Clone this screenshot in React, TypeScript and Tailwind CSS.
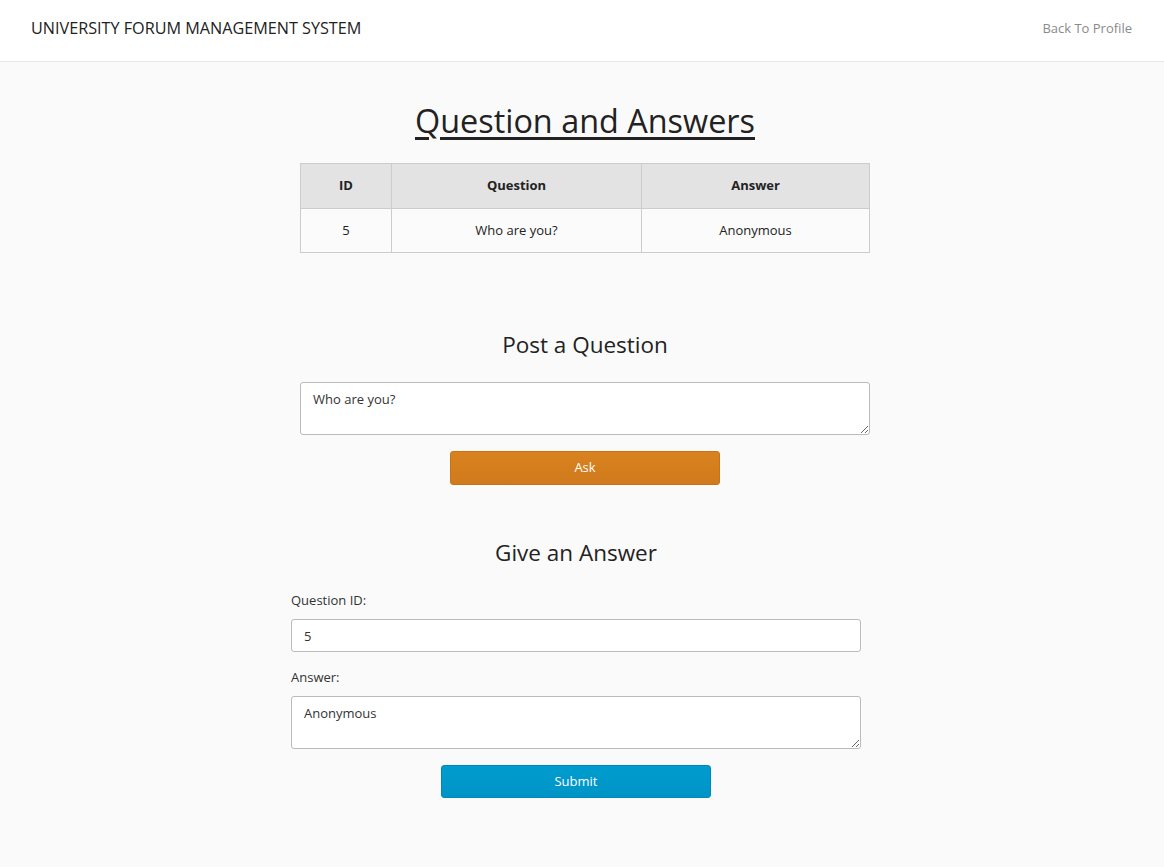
import React from "react";

export default function App() {
  const font = { fontFamily: '"Open Sans", "Noto Sans", sans-serif' };
  return (
    <div className="min-h-[867px] bg-[#fafafa] text-[#222]" style={font}>
      <header className="h-[62px] bg-white border-b border-[#e8e8e8] flex items-center justify-between pl-[31px] pr-[32px] pb-[4px]">
        <div className="text-[16.2px] text-[#222]">UNIVERSITY FORUM MANAGEMENT SYSTEM</div>
        <a className="text-[13px] text-[#8a8a8a]">Back To Profile</a>
      </header>

      <div className="flex flex-col">
        <div className="ml-[300px] w-[570px] flex flex-col items-center">
          <h1 className="mt-[34px] text-[32.4px] font-normal leading-[48px] underline underline-offset-[4px] decoration-[3px] text-[#222]">
            Question and Answers
          </h1>
          <table className="mt-[19px] w-[570px] border-collapse text-[13px] text-[#222]">
            <thead>
              <tr className="bg-[#e3e3e3]">
                <th className="w-[91px] h-[45px] border border-[#ccc] font-bold">ID</th>
                <th className="w-[250px] h-[45px] border border-[#ccc] font-bold">Question</th>
                <th className="h-[45px] border border-[#ccc] font-bold">Answer</th>
              </tr>
            </thead>
            <tbody>
              <tr className="bg-[#fbfbfb]">
                <td className="h-[44px] border border-[#ccc] text-center">5</td>
                <td className="h-[44px] border border-[#ccc] text-center">Who are you?</td>
                <td className="h-[44px] border border-[#ccc] text-center">Anonymous</td>
              </tr>
            </tbody>
          </table>

          <h2 className="mt-[76px] text-[22.5px] font-normal leading-[32px] text-[#222]">Post a Question</h2>
          <textarea
            className="mt-[21px] w-[570px] h-[53px] bg-white border border-[#bbb] rounded-[3px] px-[12px] py-[7px] text-[13px] text-[#333] resize-y outline-none"
            defaultValue="Who are you?"
          />
          <button className="mt-[16px] w-[270px] h-[34px] rounded-[3px] border border-[#c47418] bg-gradient-to-b from-[#d9821f] to-[#cf7a1c] text-white text-[13px]">
            Ask
          </button>
        </div>

        <div className="ml-[291px] w-[570px] flex flex-col">
          <h2 className="mt-[52px] text-center text-[22.5px] font-normal leading-[32px] text-[#222]">Give an Answer</h2>
          <label className="mt-[22px] text-[13px] text-[#333] leading-[18px]">Question ID:</label>
          <input
            className="mt-[10px] w-[570px] h-[33px] bg-white border border-[#bbb] rounded-[3px] px-[12px] text-[13px] text-[#333] outline-none"
            defaultValue="5"
          />
          <label className="mt-[16px] text-[13px] text-[#333] leading-[18px]">Answer:</label>
          <textarea
            className="mt-[10px] w-[570px] h-[53px] bg-white border border-[#bbb] rounded-[3px] px-[12px] py-[7px] text-[13px] text-[#333] resize-y outline-none"
            defaultValue="Anonymous"
          />
          <button className="mt-[16px] self-center w-[270px] h-[33px] rounded-[3px] border border-[#0088bb] bg-gradient-to-b from-[#009ccf] to-[#0094c6] text-white text-[13px]">
            Submit
          </button>
        </div>
      </div>
    </div>
  );
}
